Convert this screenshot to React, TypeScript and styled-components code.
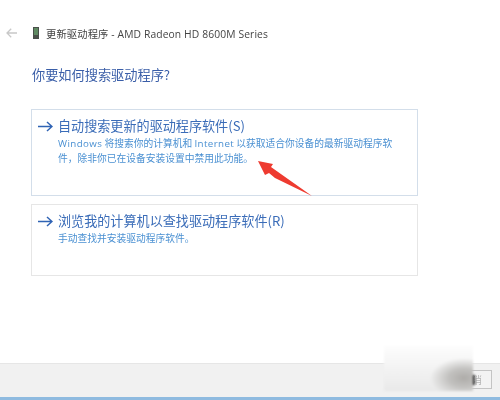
import React from "react";
import styled, { createGlobalStyle } from "styled-components";

const cjk = `"Noto Sans CJK SC", "Open Sans", sans-serif`;

const GlobalStyle = createGlobalStyle`
  html, body {
    margin: 0;
    padding: 0;
    background: #fff;
    font-family: "Open Sans", "Noto Sans CJK SC", sans-serif;
  }
`;

const Page = styled.div`
  position: relative;
  width: 500px;
  height: 400px;
  overflow: hidden;
  background: #fff;
  display: flex;
  flex-direction: column;
`;

const Header = styled.div`
  height: 18px;
  margin-top: 24px;
  display: flex;
  align-items: center;
  padding-left: 6px;
`;

const HeaderTitle = styled.span`
  margin-left: 7px;
  font-family: "Open Sans", ${cjk};
  font-size: 10.3px;
  letter-spacing: 0.12px;
  color: #444;
  white-space: nowrap;
  filter: blur(0.3px);
`;

const Content = styled.div`
  flex: 1;
  padding: 23px 82px 0 31px;
  display: flex;
  flex-direction: column;
`;

const Heading = styled.div`
  margin-left: 1px;
  height: 20px;
  line-height: 20px;
  font-family: ${cjk};
  font-size: 13.2px;
  color: #3a5ea8;
  white-space: nowrap;
  filter: blur(0.3px);
`;

const Cards = styled.div`
  margin-top: 24px;
  display: flex;
  flex-direction: column;
  gap: 8px;
`;

const Card = styled.div<{ $height: number; $edge: string }>`
  height: ${(p) => p.$height}px;
  box-sizing: border-box;
  border: 1px solid ${(p) => p.$edge};
  padding: 6px 0 0 6px;
  display: flex;
  gap: 5px;
`;

const ArrowBox = styled.div`
  width: 15px;
  height: 20px;
  display: flex;
  align-items: center;
  flex-shrink: 0;
`;

const CardBody = styled.div`
  min-width: 0;
`;

const CardTitle = styled.div`
  height: 20px;
  line-height: 20px;
  font-family: ${cjk};
  font-size: 13.1px;
  color: #3a6cb8;
  white-space: nowrap;
  filter: blur(0.3px);
`;

const CardText = styled.div`
  font-family: ${cjk};
  font-size: 9.75px;
  line-height: 14px;
  color: #4a90d2;
  white-space: nowrap;
  filter: blur(0.3px);
`;

const Latin = styled.span`
  font-family: "Open Sans", sans-serif;
  letter-spacing: 0.4px;
`;

const Footer = styled.div`
  height: 37px;
  box-sizing: border-box;
  background: #f1f1f1;
  border-top: 1px solid #e6e6e6;
  border-bottom: 3px solid #8fbbe0;
  display: flex;
  justify-content: flex-end;
  padding: 6px 8px 0 0;
`;

const FooterButton = styled.div`
  width: 74px;
  height: 19px;
  box-sizing: border-box;
  border: 1px solid #c4c4c4;
  background: #f3f3f3;
  display: flex;
  align-items: center;
  justify-content: flex-end;
  padding-right: 9px;
  font-family: ${cjk};
  font-size: 10px;
  color: #b5b5b5;
  filter: blur(0.3px);
`;

const Watermark = styled.div`
  position: absolute;
  left: 384px;
  top: 346px;
  width: 89px;
  height: 45px;
  background:
    radial-gradient(ellipse 34px 20px at 80px 32px, #aeaca9 0%, #c2c1bf 45%, rgba(225, 225, 225, 0) 100%),
    linear-gradient(#fdfdfd 0%, #f6f6f6 35%, #e9e9e9 100%);
  filter: blur(1px);

  &::after {
    content: "";
    position: absolute;
    right: -2px;
    top: 29px;
    width: 2px;
    height: 10px;
    background: #333;
  }
`;

const Pointer = styled.svg`
  position: absolute;
  left: 255px;
  top: 158px;
  filter: blur(0.4px);
`;

const BlueArrow = () => (
  <svg width="15" height="11" viewBox="0 0 15 11" fill="none" stroke="#2f63b4" strokeWidth="1.5">
    <path d="M0 5.5H14M9 1l5 4.5-5 4.5" />
  </svg>
);

const BackIcon = () => (
  <svg width="11" height="10" viewBox="0 0 11 10" fill="none" stroke="#c8c8c8" strokeWidth="1.3">
    <path d="M11 5H1M5.2 .8 1 5l4.2 4.2" />
  </svg>
);

const DeviceIcon = () => (
  <svg width="6" height="12" viewBox="0 0 6 12" style={{ marginLeft: 16 }}>
    <rect width="6" height="12" fill="#4a4f4a" />
    <rect x="1" y="1" width="4" height="7" fill="#5f8a62" />
  </svg>
);

export default function App() {
  return (
    <Page>
      <GlobalStyle />
      <Header>
        <BackIcon />
        <DeviceIcon />
        <HeaderTitle>更新驱动程序 - AMD Radeon HD 8600M Series</HeaderTitle>
      </Header>
      <Content>
        <Heading>你要如何搜索驱动程序?</Heading>
        <Cards>
          <Card $height={87} $edge="#d3deea">
            <ArrowBox>
              <BlueArrow />
            </ArrowBox>
            <CardBody>
              <CardTitle>自动搜索更新的驱动程序软件(S)</CardTitle>
              <CardText>
                <Latin>Windows</Latin> 将搜索你的计算机和 <Latin>Internet</Latin> 以获取适合你设备的最新驱动程序软
                <br />
                件，除非你已在设备安装设置中禁用此功能。
              </CardText>
            </CardBody>
          </Card>
          <Card $height={72} $edge="#e6e6e6">
            <ArrowBox>
              <BlueArrow />
            </ArrowBox>
            <CardBody>
              <CardTitle>浏览我的计算机以查找驱动程序软件(R)</CardTitle>
              <CardText>手动查找并安装驱动程序软件。</CardText>
            </CardBody>
          </Card>
        </Cards>
      </Content>
      <Footer>
        <FooterButton>取消</FooterButton>
      </Footer>
      <Watermark />
      <Pointer width="60" height="45" viewBox="0 0 60 45">
        <path d="M3 3 L18 6 L16 9 L57 38 L20 20 L14 15 L10 17 Z" fill="#ee3b30" />
      </Pointer>
    </Page>
  );
}
